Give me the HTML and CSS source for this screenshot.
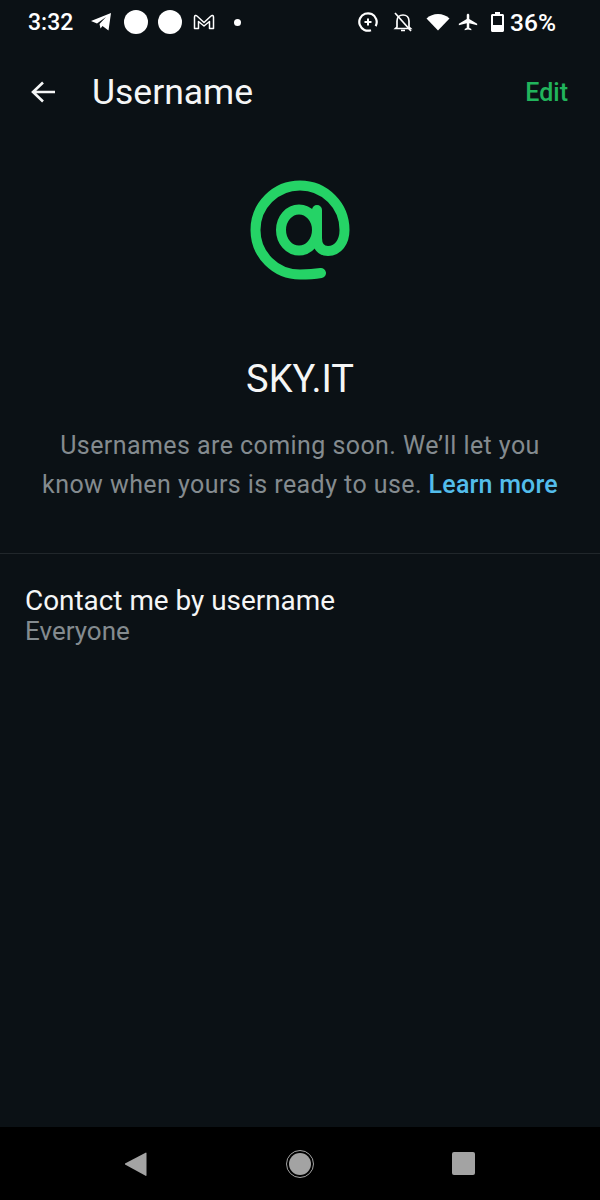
FILE: index.html
```html
<!DOCTYPE html>
<html lang="en">
<head>
    <meta charset="UTF-8">
    <meta name="viewport" content="width=device-width, initial-scale=1.0">
    <title>Username</title>
    <link rel="stylesheet" href="styles.css">
</head>
<body>
    <div class="screen">
        <!-- status bar -->
        <div class="status">
            <div class="status-left">
                <span class="time">3:32</span>
                <svg class="ic-telegram" width="22" height="20" viewBox="0 0 22 20"><path d="M1 9 21 1 18.500 18.500 12.500 14 10.500 16.500 9.500 12 16 5 7 11.500Z" fill="#fff"/></svg>
                <span class="blob"></span>
                <span class="blob"></span>
                <svg class="ic-gmail" width="22" height="16" viewBox="0 0 22 16"><path d="M1.500 14.500V3C1.500 1.500 3 1 4 2L11 8.500 18 2C19 1 20.500 1.500 20.500 3V14.500H16.500V7.500L11 12 5.500 7.500V14.500Z" fill="none" stroke="#fff" stroke-width="1.500" stroke-linejoin="round"/></svg>
                <span class="dot"></span>
            </div>
            <div class="status-right">
                <svg class="ic-sync" width="20" height="20" viewBox="0 0 20 20"><circle cx="10" cy="10" r="8.700" fill="none" stroke="#fff" stroke-width="2.200" stroke-dasharray="48 6.700" transform="rotate(70 10 10)"/><path d="M10 6.500V13.500M6.500 10H13.500" stroke="#fff" stroke-width="2"/></svg>
                <svg class="ic-bell" width="20" height="22" viewBox="0 0 20 22"><path d="M4 16V10C4 6.500 6.500 4 10 4S16 6.500 16 10V16L17.500 17.500H2.500ZM8 19.500H12" fill="none" stroke="#fff" stroke-width="1.700"/><path d="M2 2 18 20" stroke="#fff" stroke-width="1.700"/></svg>
                <svg class="ic-wifi" width="24" height="18" viewBox="0 0 24 18"><path d="M0.500 5.500C6.500 -0.500 17.500 -0.500 23.500 5.500L12 17.500Z" fill="#fff"/></svg>
                <svg class="ic-plane" width="20" height="20" viewBox="0 0 24 24"><path d="M23 16v-2l-9.500-5.500V3.500C13.500 2.700 12.800 2 12 2S10.500 2.700 10.500 3.500V8.500L1 14v2l9.500-2.500V19l-2.500 1.500V22l4-1 4 1v-1.500L13.500 19v-5.500Z" fill="#fff"/></svg>
                <svg class="ic-battery" width="13" height="20" viewBox="0 0 13 20"><path d="M4 0H9V2H11.500C12.300 2 13 2.700 13 3.500V18.500C13 19.300 12.300 20 11.500 20H1.500C0.700 20 0 19.300 0 18.500V3.500C0 2.700 0.700 2 1.500 2H4ZM2 4V13H11V4Z" fill="#fff" fill-rule="evenodd"/></svg>
                <span class="percent">36%</span>
            </div>
        </div>

        <!-- top bar -->
        <div class="toolbar">
            <svg class="back" width="26" height="24" viewBox="0 0 26 24"><path d="M25 12H3M13 2.500 3 12 13 21.500" fill="none" stroke="#f5f6f6" stroke-width="2.600"/></svg>
            <h1 class="title">Username</h1>
            <a class="edit" href="#">Edit</a>
        </div>

        <!-- username -->
        <div class="info">
            <svg class="at" width="100" height="100" viewBox="0 0 100 100">
                <ellipse cx="49" cy="50" rx="18" ry="20.500" fill="none" stroke="#25d366" stroke-width="10"/>
                <path d="M71 93C65 94 57 94.500 50 94.500A44.500 44.500 0 1 1 94.500 50C94.500 62 88 71 78 71C71 71 67 66 67 58V30" fill="none" stroke="#25d366" stroke-width="10" stroke-linecap="round"/>
            </svg>
            <div class="name">SKY.IT</div>
            <p class="note">Usernames are coming soon. We’ll let you know when yours is ready to use. <a class="learn" href="#">Learn more</a></p>
        </div>

        <!-- setting -->
        <div class="row">
            <div class="row-title">Contact me by username</div>
            <div class="row-sub">Everyone</div>
        </div>

        <!-- android nav -->
        <div class="navbar">
            <svg width="24" height="26" viewBox="0 0 24 26"><path d="M22.500 2V24.500L22 25 1 13.500 1 12.500 22 1.500Z" fill="#a3a3a3"/></svg>
            <span class="home"><span class="home-in"></span></span>
            <span class="recent"></span>
        </div>
    </div>
</body>
</html>
```

FILE: styles.css
```css
*{
    margin: 0;
    padding: 0;
    box-sizing: border-box;
}
body{
    background-color: #0b1115;
    font-family: Roboto, "Liberation Sans", sans-serif;
}
.screen{
    width: 600px;
    height: 1200px;
    display: flex;
    flex-direction: column;
    background-color: #0b1115;
    color: #f5f6f6;
}
/* status bar */
.status{
    height: 44px;
    display: flex;
    justify-content: space-between;
    align-items: center;
    padding: 0 44px 0 28px;
}
.status-left,.status-right{
    display: flex;
    align-items: center;
}
.time{
    font-size: 23px;
    font-weight: 500;
    color: #fff;
    margin-right: 17px;
}
.ic-telegram{
    margin-right: 12px;
}
.blob{
    width: 24px;
    height: 24px;
    border-radius: 50%;
    background-color: #fff;
    margin-right: 10px;
}
.ic-gmail{
    margin-left: 1px;
    margin-right: 19px;
}
.dot{
    width: 7px;
    height: 7px;
    border-radius: 50%;
    background-color: #fff;
}
.ic-sync{
    margin-right: 15px;
}
.ic-bell{
    margin-right: 13px;
}
.ic-wifi{
    margin-right: 8px;
}
.ic-plane{
    margin-right: 13px;
}
.ic-battery{
    margin-right: 6px;
}
.percent{
    font-size: 24.500px;
    font-weight: 500;
    color: #fff;
}
/* top bar */
.toolbar{
    height: 94px;
    display: flex;
    align-items: center;
    padding: 2px 32px 0 30px;
}
.back{
    margin-right: 36px;
}
.title{
    flex: 1;
    font-size: 35.500px;
    font-weight: 400;
}
.edit{
    font-size: 25px;
    font-weight: 500;
    color: #21b45c;
    text-decoration: none;
}
/* username block */
.info{
    display: flex;
    flex-direction: column;
    align-items: center;
    padding: 42px 30px 0;
    height: 416px;
    border-bottom: 1px solid #21272b;
}
.at{
    display: block;
}
.name{
    font-size: 38px;
    margin-top: 77px;
    line-height: 44px;
}
.note{
    width: 530px;
    margin-top: 25px;
    font-size: 25px;
    line-height: 39px;
    text-align: center;
    color: #848b8f;
    letter-spacing: 0.430px;
}
.learn{
    color: #53bdeb;
    font-weight: 500;
    letter-spacing: 0.2px;
    text-decoration: none;
}
/* setting row */
.row{
    padding: 29px 25px 0;
    flex: 1;
}
.row-title{
    font-size: 27.900px;
    line-height: 35px;
}
.row-sub{
    font-size: 26px;
    line-height: 27px;
    color: #848b8f;
}
/* android nav */
.navbar{
    height: 73px;
    background-color: #000;
    display: flex;
    align-items: center;
    justify-content: space-between;
    padding: 0 125px 0 124px;
}
.home{
    width: 28px;
    height: 28px;
    border: 1px solid #a3a3a3;
    border-radius: 50%;
    display: flex;
    align-items: center;
    justify-content: center;
}
.home-in{
    width: 22px;
    height: 22px;
    border-radius: 50%;
    background-color: #a3a3a3;
}
.recent{
    width: 23px;
    height: 23px;
    border-radius: 2px;
    background-color: #a3a3a3;
}
```
